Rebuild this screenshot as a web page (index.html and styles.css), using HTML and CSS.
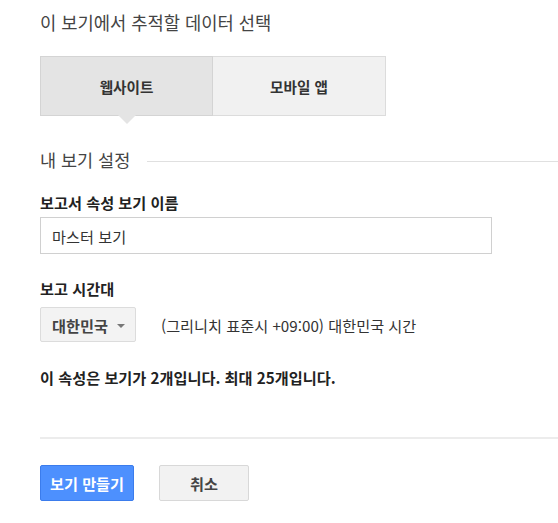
FILE: index.html
```html
<!DOCTYPE html>
<html lang="ko">
<head>
<meta charset="utf-8">
<link rel="stylesheet" href="styles.css">
</head>
<body>
<div class="page">
  <div class="title">이 보기에서 추적할 데이터 선택</div>
  <div class="tabs">
    <div class="tab active">웹사이트</div>
    <div class="tab">모바일 앱</div>
  </div>
  <div class="section-head">
    <span class="section-title">내 보기 설정</span>
    <span class="section-line"></span>
  </div>
  <div class="label">보고서 속성 보기 이름</div>
  <div class="input">마스터 보기</div>
  <div class="label tz-label">보고 시간대</div>
  <div class="tz-row">
    <div class="select">대한민국 <span class="caret"></span></div>
    <div class="tz-text">(그리니치 표준시 +09:00) 대한민국 시간</div>
  </div>
  <div class="note">이 속성은 보기가 2개입니다. 최대 25개입니다.</div>
  <div class="divider"></div>
  <div class="actions">
    <div class="btn primary">보기 만들기</div>
    <div class="btn">취소</div>
  </div>
</div>
</body>
</html>
```
FILE: styles.css
```css
html, body {
  margin: 0;
  padding: 0;
  background: #fff;
}
body {
  font-family: "Noto Sans CJK KR", "Noto Sans", "Liberation Sans", sans-serif;
  color: #222;
}
.page {
  padding: 11px 0 0 40px;
}
.title {
  font-size: 17.7px;
  line-height: 22px;
  color: #444;
}
.tabs {
  display: flex;
  margin-top: 23px;
}
.tab {
  position: relative;
  width: 173px;
  height: 60px;
  box-sizing: border-box;
  border: 1px solid #dcdcdc;
  background: #f1f1f1;
  display: flex;
  align-items: center;
  justify-content: center;
  font-size: 14.6px;
  font-weight: bold;
  color: #333;
}
.tab + .tab {
  border-left: none;
  width: 173px;
}
.tab.active {
  background: #e4e4e4;
  border-color: #d4d4d4;
}
.tab.active::after {
  content: "";
  position: absolute;
  left: 77px;
  bottom: -9px;
  width: 0;
  height: 0;
  border-left: 9px solid transparent;
  border-right: 9px solid transparent;
  border-top: 9px solid #e4e4e4;
}
.section-head {
  display: flex;
  align-items: center;
  margin-top: 33px;
}
.section-title {
  font-size: 17.5px;
  line-height: 22px;
  color: #444;
}
.section-line {
  flex: 1;
  height: 1px;
  background: #e0e0e0;
  margin-left: 17px;
  margin-top: 2px;
}
.label {
  font-size: 15.2px;
  font-weight: bold;
  line-height: 20px;
  margin-top: 21px;
  color: #222;
}
.input {
  margin-top: 5px;
  width: 452px;
  height: 37px;
  box-sizing: border-box;
  border: 1px solid #d0d0d0;
  padding-left: 11px;
  display: flex;
  align-items: center;
  font-size: 15.2px;
  color: #333;
}
.tz-label {
  margin-top: 24px;
}
.tz-row {
  display: flex;
  align-items: center;
  margin-top: 9px;
}
.select {
  width: 96px;
  height: 35px;
  box-sizing: border-box;
  border: 1px solid #dcdcdc;
  border-radius: 2px;
  background: #f3f3f3;
  display: flex;
  align-items: center;
  padding-left: 11px;
  font-size: 15.2px;
  font-weight: bold;
  color: #444;
}
.caret {
  display: inline-block;
  margin-left: 9px;
  margin-top: 2px;
  border-left: 4px solid transparent;
  border-right: 4px solid transparent;
  border-top: 4px solid #777;
}
.tz-text {
  margin-left: 25px;
  font-size: 15.2px;
  color: #333;
}
.note {
  margin-top: 25px;
  font-size: 15.2px;
  font-weight: bold;
  line-height: 20px;
  color: #222;
}
.divider {
  margin-top: 50px;
  height: 2px;
  background: #ececec;
}
.actions {
  display: flex;
  gap: 25px;
  margin-top: 26px;
}
.btn {
  height: 36px;
  box-sizing: border-box;
  border: 1px solid #d8d8d8;
  border-radius: 2px;
  background: #f2f2f2;
  display: flex;
  align-items: center;
  justify-content: center;
  font-size: 15.2px;
  font-weight: bold;
  color: #444;
  width: 90px;
}
.btn.primary {
  width: 94px;
  background: #4d90fe;
  border-color: #3b7cec;
  color: #fff;
}
```
